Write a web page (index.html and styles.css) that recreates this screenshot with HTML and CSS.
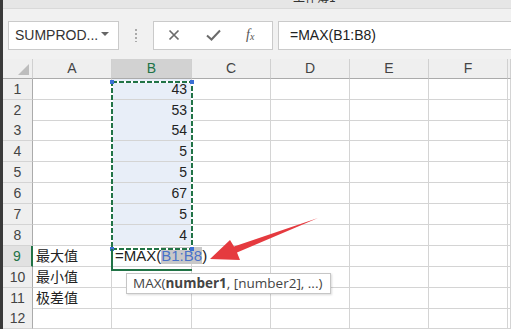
FILE: index.html
```html
<!DOCTYPE html>
<html lang="zh">
<head>
  <meta charset="UTF-8">
  <title>MAX 函数</title>
  <link rel="stylesheet" href="styles.css">
</head>
<body>
<div class="screen">
  <div class="edge"></div>
  <div class="app">
    <div class="titlebar"><span>工作簿1</span></div>
    <div class="formula-bar">
      <div class="name-box"><span>SUMPROD...</span><span class="caret"></span></div>
      <div class="grip"></div>
      <div class="fx-buttons">
        <svg width="12" height="12" viewBox="0 0 12 12"><path d="M1.5 1.5 L10.5 10.5 M10.5 1.5 L1.5 10.5" stroke="#6b6b6b" stroke-width="1.7" fill="none"/></svg>
        <svg width="15" height="12" viewBox="0 0 15 12"><path d="M1 6.5 L5.5 10.5 L14 1.5" stroke="#6b6b6b" stroke-width="2" fill="none"/></svg>
        <span class="fx">f<sub>x</sub></span>
      </div>
      <div class="formula-input">=MAX(B1:B8)</div>
    </div>
    <div class="sheet">
      <div class="row head">
        <div class="c corner"></div><div class="c">A</div><div class="c sel">B</div><div class="c">C</div><div class="c">D</div><div class="c">E</div><div class="c">F</div><div class="c"></div>
      </div>
      <div class="row">
        <div class="c rh">1</div><div class="c"></div><div class="c num">43</div><div class="c"></div><div class="c"></div><div class="c"></div><div class="c"></div><div class="c"></div>
      </div>
      <div class="row short">
        <div class="c rh">2</div><div class="c"></div><div class="c num">53</div><div class="c"></div><div class="c"></div><div class="c"></div><div class="c"></div><div class="c"></div>
      </div>
      <div class="row">
        <div class="c rh">3</div><div class="c"></div><div class="c num">54</div><div class="c"></div><div class="c"></div><div class="c"></div><div class="c"></div><div class="c"></div>
      </div>
      <div class="row">
        <div class="c rh">4</div><div class="c"></div><div class="c num">5</div><div class="c"></div><div class="c"></div><div class="c"></div><div class="c"></div><div class="c"></div>
      </div>
      <div class="row">
        <div class="c rh">5</div><div class="c"></div><div class="c num">5</div><div class="c"></div><div class="c"></div><div class="c"></div><div class="c"></div><div class="c"></div>
      </div>
      <div class="row">
        <div class="c rh">6</div><div class="c"></div><div class="c num">67</div><div class="c"></div><div class="c"></div><div class="c"></div><div class="c"></div><div class="c"></div>
      </div>
      <div class="row">
        <div class="c rh">7</div><div class="c"></div><div class="c num">5</div><div class="c"></div><div class="c"></div><div class="c"></div><div class="c"></div><div class="c"></div>
      </div>
      <div class="row">
        <div class="c rh">8</div><div class="c"></div><div class="c num">4</div><div class="c"></div><div class="c"></div><div class="c"></div><div class="c"></div><div class="c"></div>
      </div>
      <div class="row">
        <div class="c rh active">9</div><div class="c txt">最大值</div><div class="c editing">=MAX(<span class="ref">B1:B8</span>)</div><div class="c"></div><div class="c"></div><div class="c"></div><div class="c"></div><div class="c"></div>
      </div>
      <div class="row">
        <div class="c rh">10</div><div class="c txt">最小值</div><div class="c"></div><div class="c"></div><div class="c"></div><div class="c"></div><div class="c"></div><div class="c"></div>
      </div>
      <div class="row short">
        <div class="c rh">11</div><div class="c txt">极差值</div><div class="c"></div><div class="c"></div><div class="c"></div><div class="c"></div><div class="c"></div><div class="c"></div>
      </div>
      <div class="row">
        <div class="c rh">12</div><div class="c"></div><div class="c"></div><div class="c"></div><div class="c"></div><div class="c"></div><div class="c"></div><div class="c"></div>
      </div>
    </div>
  </div>

  <!-- marching ants round B1:B8 -->
  <svg class="marquee" width="82" height="169" viewBox="0 0 82 169">
    <rect x="1" y="1" width="80" height="167" fill="none" stroke="#fff" stroke-width="2"/>
    <rect x="1" y="1" width="80" height="167" fill="none" stroke="#217346" stroke-width="2" stroke-dasharray="5 2"/>
    <rect x="-1" y="-1" width="4" height="4" fill="#3b6fd4"/>
    <rect x="79" y="-1" width="4" height="4" fill="#3b6fd4"/>
    <rect x="-1" y="166" width="4" height="4" fill="#3b6fd4"/>
    <rect x="79" y="166" width="4" height="4" fill="#3b6fd4"/>
  </svg>
  <div class="active-cell"></div>

  <div class="tooltip">MAX(<b>number1</b>, [number2], ...)</div>

  <svg class="arrow" width="511" height="329" viewBox="0 0 511 329">
    <polygon points="210,259 230,240 234,246.5 318,218 237,252.5 240,260" fill="#e53a3f"/>
  </svg>
</div>
</body>
</html>
```

FILE: styles.css
```css
body, div {
  margin: 0;
  padding: 0;
}

body {
  background: #fff;
  font-family: "Liberation Sans", "Noto Sans CJK SC", sans-serif;
  overflow: hidden;
}

.screen {
  position: relative;
  display: flex;
  width: 511px;
  height: 329px;
  overflow: hidden;
}

.edge {
  width: 3px;
  background: #3a3a3a;
}

.app {
  flex: 1;
  display: flex;
  flex-direction: column;
  min-width: 0;
}

.titlebar {
  height: 8px;
  overflow: hidden;
  background: #e6e6e6;
  border-bottom: 1px solid #d9d9d9;
  padding-left: 290px;
}

.titlebar span {
  display: block;
  margin-top: -10px;
  font: 12px/14px "Noto Sans CJK SC", sans-serif;
  color: #333;
}

/* formula bar */
.formula-bar {
  height: 53px;
  box-sizing: border-box;
  background: #f1f1f1;
  display: flex;
  align-items: flex-start;
  padding: 12px 0 0 5px;
}

.name-box {
  width: 111px;
  height: 29px;
  box-sizing: border-box;
  background: #fff;
  border: 1px solid #cacaca;
  display: flex;
  align-items: center;
  justify-content: space-between;
  padding: 0 9px 0 6px;
  font-size: 14px;
  color: #333;
}

.caret {
  width: 0;
  height: 0;
  border-left: 4px solid transparent;
  border-right: 4px solid transparent;
  border-top: 4px solid #666;
  margin-top: -2px;
}

.grip {
  width: 2px;
  height: 13px;
  margin: 8px 16px 0 16px;
  background: repeating-linear-gradient(#aaa 0 2px, transparent 2px 4px);
}

.fx-buttons {
  width: 120px;
  height: 29px;
  box-sizing: border-box;
  background: #fff;
  border: 1px solid #cacaca;
  display: flex;
  align-items: center;
  padding-left: 14px;
  gap: 26px;
}

.fx {
  font: italic 14px "Liberation Serif", serif;
  color: #555;
  margin-left: -1px;
}

.fx sub {
  font-size: 10px;
  vertical-align: -1px;
}

.formula-input {
  flex: 1;
  height: 29px;
  box-sizing: border-box;
  margin-left: 5px;
  background: #fff;
  border: 1px solid #cacaca;
  border-right: 0;
  padding-left: 11px;
  line-height: 27px;
  font-size: 14px;
  color: #222;
}

/* sheet grid */
.sheet {
  flex: 1;
  font-size: 14px;
  color: #222;
}

.row {
  display: grid;
  grid-template-columns: 30px 79px 80px 79px 79px 79px 79px 1fr;
  height: 21px;
}

.row.short {
  height: 20px;
}

.row.head {
  height: 20px;
  background: #efefef;
}

.c {
  box-sizing: border-box;
  border-right: 1px solid #d4d4d4;
  border-bottom: 1px solid #d4d4d4;
  line-height: 20px;
  white-space: nowrap;
}

.head .c {
  text-align: center;
  color: #444;
  border-bottom-color: #ababab;
  border-right-color: #d0d0d0;
  line-height: 19px;
}

.head .c.sel {
  background: #d2d2d2;
  color: #217346;
}

.corner {
  display: flex;
  align-items: flex-end;
  justify-content: flex-end;
  padding: 0 3px 3px 0;
}

.corner::after {
  content: "";
  width: 0;
  height: 0;
  border-left: 11px solid transparent;
  border-bottom: 11px solid #bdbdbd;
}

.rh {
  background: #efefef;
  text-align: center;
  color: #444;
  border-right-color: #ababab;
}

.rh.active {
  background: #e1e1e1;
  color: #217346;
  border-right: 2px solid #217346;
}

.num {
  background: #e8eef8;
  text-align: right;
  padding-right: 4px;
}

.txt {
  padding-left: 3px;
  font-family: "Noto Sans CJK SC", sans-serif;
  line-height: 19px;
}

.editing {
  position: relative;
  z-index: 2;
  padding-left: 3px;
  font-size: 15px;
  line-height: 20px;
  overflow: visible;
}

.ref {
  background: #c8c8c8;
  color: #4a72c8;
}

/* overlays */
.marquee {
  position: absolute;
  left: 111px;
  top: 81px;
  overflow: visible;
  z-index: 3;
}

.active-cell {
  position: absolute;
  left: 111px;
  top: 249px;
  width: 81px;
  height: 22px;
  box-sizing: border-box;
  border-left: 2px solid #217346;
  border-bottom: 2px solid #217346;
  z-index: 3;
}

.tooltip {
  position: absolute;
  left: 126px;
  top: 273px;
  width: 205px;
  height: 21px;
  box-sizing: border-box;
  background: #fff;
  border: 1px solid #c6c6c6;
  box-shadow: 1px 1px 2px rgba(0, 0, 0, 0.15);
  padding-left: 6px;
  font-family: "Open Sans", "Liberation Sans", sans-serif;
  font-size: 13.5px;
  line-height: 19px;
  color: #444;
  z-index: 4;
}

.arrow {
  position: absolute;
  left: 0;
  top: 0;
  pointer-events: none;
  z-index: 5;
}
```
